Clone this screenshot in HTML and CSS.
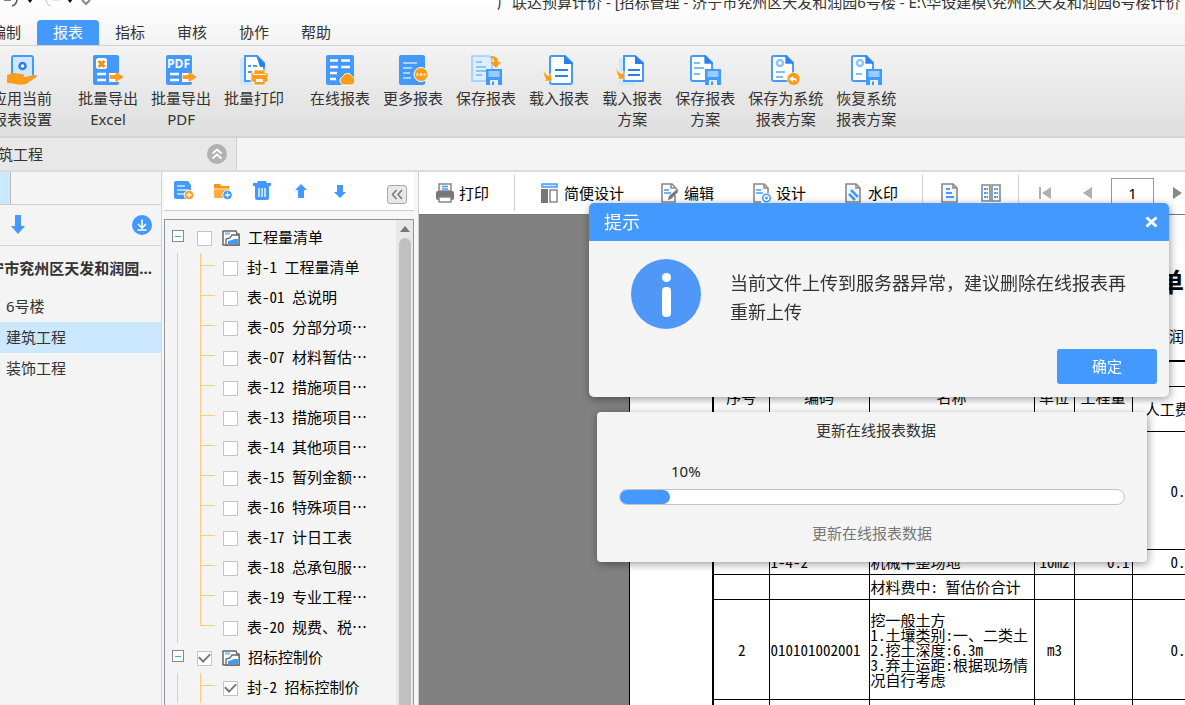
FILE: index.html
```html
<!DOCTYPE html>
<html lang="zh-CN">
<head>
<meta charset="utf-8">
<title>广联达预算计价</title>
<link rel="stylesheet" href="styles.css">
</head>
<body>
<svg class="defs" aria-hidden="true">
  <symbol id="floppy" viewBox="0 0 16 16">
    <path d="M0 0h16v16H0z" fill="#49f"/><path d="M2.500 2h11v6h-11z" fill="#9cf"/><path d="M4 11h8v5H4z" fill="#e6f3ff"/><path d="M6 12.500h2V16H6z" fill="#49f"/>
  </symbol>
  <symbol id="page" viewBox="0 0 24 28">
    <path d="M3 1h13l7 7v17a2 2 0 0 1-2 2H3a2 2 0 0 1-2-2V3a2 2 0 0 1 2-2z" fill="#fff" stroke="#49f" stroke-width="2"/><path d="M15 0l9 9h-9z" fill="#2b7fe8"/>
  </symbol>
  <symbol id="export" viewBox="0 0 15 10">
    <path d="M1 3.500h6V.500l7 4.500-7 4.500v-3H1z" fill="#ff9d1a" stroke="#ff9d1a" stroke-linejoin="round"/>
  </symbol>
  <symbol id="folder-doc" viewBox="0 0 18 16">
    <path d="M1 1h13l1 3h2v11H1z" fill="#fff" stroke="#666" stroke-width="1.500" stroke-linejoin="round"/><path d="M3 2h5v3H3z" fill="#9cf"/><path d="M4 15V9l4-1 2-3h7v10z" fill="#fff" stroke="#666" stroke-width="1.300"/><path d="M6 14v-3l4-1 2-1h4v5z" fill="#49f"/>
  </symbol>
</svg>

<div class="title-bar">
  <svg class="quick" width="92" height="14" viewBox="0 0 92 14" fill="none" aria-hidden="true">
    <path d="M4 4h7M17 3c0 4-2 6-5 7" stroke="#555" stroke-width="1.500"/><path d="M27 3h6l-3 4z" fill="#111"/>
    <path d="M60 4h-7M46 3c0 4 2 6 5 7" stroke="#ccc" stroke-width="1.200"/><path d="M67 3h6l-3 4z" fill="#111"/><path d="M82 4l4 4 4-4" stroke="#888" stroke-width="2"/>
  </svg>
  <span class="app-title">广联达预算计价 - [招标管理 - 济宁市兖州区天发和润园6号楼 - E:\华设建模\兖州区天发和润园6号楼计价</span>
</div>

<nav class="tabs">
  <button class="tab">编制</button>
  <button class="tab active">报表</button>
  <button class="tab">指标</button>
  <button class="tab">审核</button>
  <button class="tab">协作</button>
  <button class="tab">帮助</button>
</nav>

<div class="ribbon">
  <div class="group">
    <button class="tool">
      <svg class="ico" viewBox="0 0 30 30"><path d="M7 1h17a2 2 0 0 1 2 2v20H5V3a2 2 0 0 1 2-2z" fill="#cfe8ff" stroke="#49f" stroke-width="2"/><circle cx="15.500" cy="11" r="3" fill="#fff" stroke="#2b7fe8" stroke-width="2.500"/><path d="M0 20l6-2 9 1c3 0 3 3 0 3h-3 6l9-2c3 0 4 2 1 3l-9 6c-6 2-13-1-19-1z" fill="#ff9d1a"/></svg>
      <span>应用当前<br>报表设置</span></button>
  </div>
  <div class="group">
    <button class="tool">
      <svg class="ico" viewBox="0 0 30 30"><rect width="26" height="30" rx="2" fill="#49f"/><rect x="3" y="3" width="11" height="11" rx="2.500" fill="#fff"/><path d="M5.500 6l6 6M11.500 6l-6 6" stroke="#ff8a00" stroke-width="2.500"/><path d="M4 19h9M4 25h9" stroke="#fff" stroke-width="2.500"/><path d="M16 18h10v9H16z" fill="#fff"/><use href="#export" x="16" y="17" width="15" height="10"/></svg>
      <span>批量导出<br>Excel</span></button>
    <button class="tool">
      <svg class="ico" viewBox="0 0 30 30"><rect width="26" height="30" rx="2" fill="#49f"/><text x="1" y="13" class="pdf">PDF</text><path d="M4 19h9M4 25h9" stroke="#fff" stroke-width="2.500"/><path d="M16 18h10v9H16z" fill="#fff"/><use href="#export" x="16" y="17" width="15" height="10"/></svg>
      <span>批量导出<br>PDF</span></button>
    <button class="tool">
      <svg class="ico" viewBox="0 0 30 30"><rect x="1" y="3" width="14" height="27" rx="2" fill="#cfe8ff"/><path d="M6 1h12l7 7v18H6z" fill="#fff" stroke="#49f" stroke-width="2"/><path d="M17 0l9 9v3h-5z" fill="#2b7fe8"/><path d="M9 11h3M14 11h4M9 17h4" stroke="#49f" stroke-width="2"/><path d="M15 15h11v3h3v9h-3v3H15v-3h-3v-9h3z" fill="#ff9d1a" stroke="#fff" stroke-width=".700"/><path d="M14 19.500h13" stroke="#fff"/><path d="M17 24h7v3h-7z" fill="#fff"/></svg>
      <span>批量打印</span></button>
  </div>
  <div class="group">
    <button class="tool">
      <svg class="ico" viewBox="0 0 30 30"><rect x="1" width="28" height="30" rx="2" fill="#49f"/><path d="M5 5.500h8M16 5.500h9M5 12h8M16 12h9M5 18h7M5 24h6" stroke="#fff" stroke-width="2.500"/><path d="M18 30a4.500 4.500 0 0 1-1-8c1-1 2-2 3-3a5 5 0 0 1 5 0c1 1 2 2 3 3a4.500 4.500 0 0 1-1 8z" fill="#ff9d1a" stroke="#fff"/></svg>
      <span>在线报表</span></button>
    <button class="tool">
      <svg class="ico" viewBox="0 0 30 30"><rect x="1" width="26" height="30" rx="2" fill="#49f"/><path d="M5 8h14M5 13h9M5 18h7M5 23h8" stroke="#a8d4ff" stroke-width="2"/><circle cx="23" cy="19.500" r="7" fill="#ff9d1a" stroke="#fff"/><path d="M18.500 19.500h2M22 19.500h2M25.500 19.500h2" stroke="#fff" stroke-width="2"/></svg>
      <span>更多报表</span></button>
    <button class="tool">
      <svg class="ico" viewBox="0 0 30 30"><path d="M1 1h17l3 3v22H1z" fill="#dceeff" stroke="#9cf" stroke-width="1.500"/><path d="M5 7h6M5 12h10M5 16h10M5 20h6" stroke="#8cc4ff" stroke-width="2"/><path d="M20 1c5 0 7 2 7 6h3l-5 6-6-6h4c0-3-1-4-3-4z" fill="#ff9d1a"/><use href="#floppy" x="15" y="14" width="16" height="16"/></svg>
      <span>保存报表</span></button>
    <button class="tool">
      <svg class="ico" viewBox="0 0 30 30"><path d="M7 1h14l7 7v19a2 2 0 0 1-2 2H8a2 2 0 0 1-2-2V2z" fill="#fff" stroke="#49f" stroke-width="2"/><path d="M20 0l9 9h-9z" fill="#2b7fe8"/><path d="M11 15h13M11 21h13" stroke="#2b7fe8" stroke-width="2"/><path d="M0 13c0 5 2 7 5 8l2-3 1 8H0l2-2c-3-4-3-8-2-11z" fill="#ff9d1a" stroke="#fff" stroke-width=".500"/></svg>
      <span>载入报表</span></button>
    <button class="tool">
      <svg class="ico" viewBox="0 0 30 30"><path d="M2 3h15v27H2z" fill="#cfe8ff"/><path d="M7 1h11l8 7v18H7z" fill="#fff" stroke="#49f" stroke-width="2"/><path d="M18 0l9 9h-9z" fill="#2b7fe8"/><path d="M11 15h12M11 20h12" stroke="#2b7fe8" stroke-width="2"/><path d="M0 11c0 5 2 7 5 8l2-3 1 8H0l2-2c-3-4-3-8-2-11z" fill="#ff9d1a" stroke="#fff" stroke-width=".500"/></svg>
      <span>载入报表<br>方案</span></button>
    <button class="tool">
      <svg class="ico" viewBox="0 0 30 30"><use href="#page" width="23" height="27"/><path d="M4 8h6M4 13h10M4 19h6" stroke="#7fbcff" stroke-width="2"/><use href="#floppy" x="15" y="14" width="16" height="16"/></svg>
      <span>保存报表<br>方案</span></button>
    <button class="tool">
      <svg class="ico" viewBox="0 0 30 30"><use href="#page" width="23" height="27"/><circle cx="9" cy="8" r="3" fill="none" stroke="#8cc4ff" stroke-width="2.500"/><path d="M5 17h9M5 22h7" stroke="#7fbcff" stroke-width="2"/><circle cx="22.500" cy="24" r="6.500" fill="#ff9d1a" stroke="#fff" stroke-width=".500"/><path d="M18 24l4-3v2c3 0 4 1 4 4-1-2-2-2-4-2v2z" fill="#fff"/></svg>
      <span>保存为系统<br>报表方案</span></button>
    <button class="tool">
      <svg class="ico" viewBox="0 0 30 30"><use href="#page" width="23" height="27"/><circle cx="9" cy="8" r="3" fill="none" stroke="#8cc4ff" stroke-width="2.500"/><path d="M5 19h6" stroke="#7fbcff" stroke-width="2"/><use href="#floppy" x="15" y="14" width="16" height="16"/></svg>
      <span>恢复系统<br>报表方案</span></button>
  </div>
</div>

<div class="crumbs">
  <div class="crumb"><span>建筑工程</span>
    <button class="icon-btn" aria-label="收起"><svg width="20" height="20" viewBox="0 0 20 20" fill="none"><circle cx="10" cy="10" r="10" fill="#b1b1b1"/><path d="M5.500 9.500L10 5.500l4.500 4M5.500 14.500L10 10.500l4.500 4" stroke="#fff" stroke-width="1.800"/></svg></button>
  </div>
</div>

<main class="work">
  <aside class="project">
    <div class="strip"><span class="strip-on"></span></div>
    <div class="project-tools">
      <button class="icon-btn" aria-label="下移"><svg width="14" height="20" viewBox="0 0 14 20"><path d="M4 0h6v11h4l-7 8-7-8h4z" fill="#49f"/></svg></button>
      <button class="icon-btn" aria-label="下载"><svg width="20" height="20" viewBox="0 0 20 20" fill="none"><circle cx="10" cy="10" r="10" fill="#49f"/><path d="M10 4.500v8M6 9l4 4 4-4M5.500 15h9" stroke="#fff" stroke-width="1.600"/></svg></button>
    </div>
    <div class="project-name"><span>济宁市兖州区天发和润园...</span></div>
    <ul class="project-list">
      <li>6号楼</li>
      <li class="selected">建筑工程</li>
      <li>装饰工程</li>
    </ul>
  </aside>

  <section class="reports">
    <div class="report-tools">
      <button class="icon-btn" aria-label="新建报表"><svg width="20" height="20" viewBox="0 0 20 20"><path d="M2 0h12l3 4v14H2a2 2 0 0 1-2-2V2a2 2 0 0 1 2-2z" fill="#49f"/><path d="M3 5h8M3 9h11M3 13h8" stroke="#cfe8ff" stroke-width="1.600"/><circle cx="15" cy="14" r="4.800" fill="#ff9d1a" stroke="#fff"/><path d="M12.500 14h5M15 11.500v5" stroke="#fff" stroke-width="1.300"/></svg></button>
      <button class="icon-btn" aria-label="新建文件夹"><svg width="20" height="20" viewBox="0 0 20 20"><path d="M1 3h6l1 2h8v12H2L1 16z" fill="#ffad42"/><path d="M1 3h6l1 2h8v2H1z" fill="#ff9210"/><path d="M1 8h14" stroke="#ffe0b0"/><circle cx="14.500" cy="14" r="4.800" fill="#49f" stroke="#fff"/><path d="M12 14h5M14.500 11.500v5" stroke="#fff" stroke-width="1.300"/></svg></button>
      <button class="icon-btn" aria-label="删除"><svg width="20" height="20" viewBox="0 0 20 20"><path d="M6 0h8l1 2h4v3H1V2h4z" fill="#49f"/><path d="M3 5h14v12a2 2 0 0 1-2 2H5a2 2 0 0 1-2-2z" fill="#49f"/><path d="M7 7v9M10 7v9M13 7v9" stroke="#fff" stroke-width="1.300"/></svg></button>
      <button class="icon-btn" aria-label="上移"><svg width="20" height="20" viewBox="0 0 20 20"><path d="M10 3l6 6h-3v8H7V9H4z" fill="#49f"/></svg></button>
      <button class="icon-btn" aria-label="下移"><svg width="20" height="20" viewBox="0 0 20 20"><path d="M10 17l6-6h-3V4H7v7H4z" fill="#49f"/></svg></button>
      <button class="collapse" aria-label="折叠"><svg width="12" height="11" viewBox="0 0 12 11" fill="none" stroke="#777" stroke-width="1.500"><path d="M5.500 1l-4 4.500 4 4.500M11 1L7 5.500l4 4.500"/></svg></button>
    </div>
    <div class="tree">
      <div class="tree-body">
        <div class="node">
          <button class="toggle" aria-label="折叠"></button>
          <label><input type="checkbox"><svg width="18" height="16"><use href="#folder-doc"/></svg><span>工程量清单</span></label>
        </div>
        <ul class="leaves">
          <li><label><input type="checkbox"><span>封-1 工程量清单</span></label></li>
          <li><label><input type="checkbox"><span>表-01 总说明</span></label></li>
          <li><label><input type="checkbox"><span>表-05 分部分项…</span></label></li>
          <li><label><input type="checkbox"><span>表-07 材料暂估…</span></label></li>
          <li><label><input type="checkbox"><span>表-12 措施项目…</span></label></li>
          <li><label><input type="checkbox"><span>表-13 措施项目…</span></label></li>
          <li><label><input type="checkbox"><span>表-14 其他项目…</span></label></li>
          <li><label><input type="checkbox"><span>表-15 暂列金额…</span></label></li>
          <li><label><input type="checkbox"><span>表-16 特殊项目…</span></label></li>
          <li><label><input type="checkbox"><span>表-17 计日工表</span></label></li>
          <li><label><input type="checkbox"><span>表-18 总承包服…</span></label></li>
          <li><label><input type="checkbox"><span>表-19 专业工程…</span></label></li>
          <li><label><input type="checkbox"><span>表-20 规费、税…</span></label></li>
        </ul>
        <div class="node">
          <button class="toggle" aria-label="折叠"></button>
          <label><input type="checkbox" checked><svg width="18" height="16"><use href="#folder-doc"/></svg><span>招标控制价</span></label>
        </div>
        <ul class="leaves open">
          <li><label><input type="checkbox" checked><span>封-2 招标控制价</span></label></li>
        </ul>
      </div>
      <div class="scroll"><span class="scroll-up"></span><span class="thumb"></span></div>
    </div>
  </section>

  <section class="preview">
    <div class="preview-tools">
      <button class="cmd print"><svg width="18" height="20" viewBox="0 0 18 20"><path d="M3 1h12v7H3z" fill="#fff" stroke="#888" stroke-width="1.500"/><path d="M6 3.500h6M6 6h6" stroke="#49f" stroke-width="1.300"/><rect y="8" width="18" height="9" rx="2" fill="#777"/><path d="M3 14h12v5H3z" fill="#fff" stroke="#888" stroke-width="1.500"/></svg>打印</button>
      <span class="bar"></span>
      <button class="cmd simple"><svg width="18" height="20" viewBox="0 0 18 20"><path d="M1 1h15v3H1z" fill="#cfe8ff" stroke="#49f" stroke-width="1.500"/><path d="M0 6h7v14H0z" fill="#777"/><path d="M9 7h7v12H9z" fill="#fff" stroke="#888" stroke-width="1.500"/></svg>简便设计</button>
      <button class="cmd edit"><svg width="18" height="20" viewBox="0 0 18 20" fill="none"><path d="M14 12v7H1V1h10l3 3" stroke="#888" stroke-width="1.600"/><path d="M10 1v4h4M14 4l3 4" stroke="#888" stroke-width="1.500"/><path d="M3 7h5M3 10h7" stroke="#49f" stroke-width="1.500"/><path d="M7 17l1-4 7-6 2 2-7 7z" fill="#777"/></svg>编辑</button>
      <button class="cmd design"><svg width="18" height="20" viewBox="0 0 18 20" fill="none"><path d="M8 19H1V1h10l4 4v5" stroke="#888" stroke-width="1.600"/><path d="M11 1v4h4" stroke="#888" stroke-width="1.500"/><path d="M3 7h5M3 10h7" stroke="#49f" stroke-width="1.500"/><circle cx="13.500" cy="15" r="3.800" fill="#fff" stroke="#49f" stroke-width="1.500"/><circle cx="13.500" cy="15" r="1.400" fill="#49f"/></svg>设计</button>
      <button class="cmd mark"><svg width="18" height="20" viewBox="0 0 18 20" fill="none"><path d="M1 1h10l4 4v14H1z" fill="#f4f8fc" stroke="#888" stroke-width="1.600"/><path d="M11 1v4h4" stroke="#888" stroke-width="1.500"/><path d="M6 7l7 7M4 11l6 6" stroke="#49f" stroke-width="2.500"/></svg>水印</button>
      <span class="bar"></span>
      <button class="icon-btn" aria-label="单页"><svg width="18" height="20" viewBox="0 0 18 20" fill="none"><path d="M1 1h11l4 4v14H1z" fill="#f4f8fc" stroke="#888" stroke-width="1.600"/><path d="M12 1v4h4" stroke="#888" stroke-width="1.500"/><path d="M5 6h4M5 10h6M5 14h8" stroke="#49f" stroke-width="2"/></svg></button>
      <button class="icon-btn" aria-label="双页"><svg width="20" height="18" viewBox="0 0 20 18" fill="none"><path d="M1 1h8v16H1zM11 1h8v16h-8z" stroke="#888" stroke-width="1.600"/><path d="M3 5h4M3 9h4M3 13h4M13 5h4M13 9h4M13 13h4" stroke="#49f" stroke-width="2" stroke-dasharray="2 .500"/></svg></button>
      <span class="bar"></span>
      <button class="icon-btn" aria-label="首页"><svg width="14" height="14" viewBox="0 0 14 14"><path d="M1 1h2v12H1zM13 1v12L4 7z" fill="#b0b0b0"/></svg></button>
      <button class="icon-btn prev" aria-label="上一页"><svg width="10" height="14" viewBox="0 0 10 14"><path d="M9 1v12L0 7z" fill="#b0b0b0"/></svg></button>
      <input class="page-no" type="text" value="1" aria-label="页码">
      <button class="icon-btn" aria-label="下一页"><svg width="10" height="14" viewBox="0 0 10 14"><path d="M1 1v12l9-6z" fill="#888"/></svg></button>
    </div>
    <div class="desk">
      <div class="paper">
        <h1>单</h1>
        <p class="sub">润园</p>
        <table>
          <colgroup><col class="c1"><col class="c2"><col class="c3"><col class="c4"><col class="c5"><col class="c6"></colgroup>
          <thead>
            <tr class="h1"><th rowspan="2">序号</th><th rowspan="2">编码</th><th rowspan="2">名称</th><th rowspan="2">单位</th><th rowspan="2">工程量</th><th></th></tr>
            <tr class="h2"><th>人工费</th></tr>
          </thead>
          <tbody>
            <tr class="tall"><td></td><td></td><td></td><td></td><td></td><td class="amount">0.</td></tr>
            <tr class="short"><td></td><td>1-4-2</td><td>机械平整场地</td><td class="mid">10m2</td><td class="num">0.1</td><td class="amount">0.</td></tr>
            <tr class="short"><td></td><td></td><td>材料费中: 暂估价合计</td><td></td><td></td><td></td></tr>
            <tr class="item"><td class="mid">2</td><td>010101002001</td><td class="desc">挖一般土方<br>1.土壤类别:一、二类土<br>2.挖土深度:6.3m<br>3.弃土运距:根据现场情<br>况自行考虑</td><td class="mid">m3</td><td></td><td class="amount">0.</td></tr>
            <tr class="short"><td></td><td></td><td></td><td></td><td></td><td></td></tr>
          </tbody>
        </table>
      </div>
    </div>
  </section>
</main>

<div class="progress-box" role="status">
  <p class="p-title">更新在线报表数据</p>
  <p class="p-value">10%</p>
  <div class="track"><div class="fill" style="width:10%"></div></div>
  <p class="p-note">更新在线报表数据</p>
</div>

<div class="dialog" role="dialog" aria-labelledby="dlg-title">
  <header><span id="dlg-title">提示</span>
    <button class="icon-btn" aria-label="关闭"><svg width="13" height="12" viewBox="0 0 13 12"><path d="M1.500 1.500l10 9M11.500 1.500l-10 9" stroke="#fff" stroke-width="3"/></svg></button></header>
  <div class="dialog-body">
    <svg class="info" width="70" height="70" viewBox="0 0 70 70"><circle cx="35" cy="35" r="35" fill="#5098f8"/><circle cx="35.500" cy="18.500" r="4.500" fill="#fff"/><rect x="31" y="28" width="9" height="30" rx="4" fill="#fff"/></svg>
    <p>当前文件上传到服务器异常，建议删除在线报表再<br>重新上传</p>
  </div>
  <footer><button class="ok">确定</button></footer>
</div>
</body>
</html>
```
FILE: styles.css
```css
* { box-sizing: border-box; margin: 0; padding: 0; }
html, body { height: 100%; }
body {
  position: relative;
  display: flex;
  flex-direction: column;
  overflow: hidden;
  background: linear-gradient(#fff, #f2f2f2 46px);
  color: #333;
  font: 15px/21px "Noto Sans", "Noto Sans CJK SC", sans-serif;
}
button { font: inherit; color: inherit; background: none; border: 0; cursor: pointer; }
ul { list-style: none; }
.defs { position: absolute; width: 0; height: 0; }
.icon-btn { display: flex; align-items: center; justify-content: center; }

/* title bar and tabs */
.title-bar { display: flex; align-items: center; height: 5px; flex: none; }
.quick { flex: none; }
.app-title { margin-left: 405px; white-space: nowrap; }
.tabs { display: flex; flex: none; margin: 15px 0 0 -25px; border-bottom: 1px solid #d2d2d2; }
.tab { height: 25px; padding: 0 16px; line-height: 25px; border-radius: 4px 4px 0 0; white-space: nowrap; }
.tab.active { background: #49f; color: #fff; }

/* ribbon */
.ribbon {
  display: flex; flex: none; gap: 26px; height: 92px; padding-top: 9px;
  background: linear-gradient(#f3f3f3, #dedede); border-bottom: 2px solid #d4d4d4;
}
.group { display: flex; align-items: flex-start; gap: 13px; }
.group:first-child { margin-left: -8px; }
.tool { display: flex; flex-direction: column; align-items: center; gap: 3px; white-space: nowrap; }
.ico { width: 30px; height: 30px; overflow: visible; }
.pdf { font: bold 12px "Open Sans", sans-serif; fill: #fff; }

/* breadcrumb row */
.crumbs { display: flex; flex: none; height: 34px; background: #f4f4f4; border-bottom: 2px solid #dcdcdc; }
.crumb {
  display: flex; align-items: center; justify-content: space-between;
  width: 237px; padding-right: 9px; background: #e8e8e8; border-right: 1px solid #d0d0d0;
}
.crumb span { margin-left: -17px; }

.work { display: flex; flex: 1; min-height: 0; background: #f4f4f4; }

/* project pane */
.project { flex: none; width: 162px; overflow: hidden; border-right: 1px solid #d4d4d4; }
.strip { height: 33px; border-bottom: 1px solid #ccc; }
.strip-on { display: block; width: 11px; height: 100%; background: #cce8ff; border-right: 1px solid #bbb; }
.project-tools {
  display: flex; align-items: center; justify-content: space-between;
  height: 41px; padding: 0 9px 0 11px; border-bottom: 1px solid #d4d4d4;
}
.project-name { display: flex; justify-content: flex-end; height: 45px; padding-right: 9px; line-height: 45px; font-weight: bold; white-space: nowrap; }
.project-list li { height: 31px; padding-left: 6px; line-height: 31px; }
.project-list .selected { background: #cce8ff; }

/* report tree */
.reports { display: flex; flex-direction: column; flex: none; width: 257px; padding: 0 4px 0 2px; border-right: 1px solid #ccc; background: #f7f7f7; }
.report-tools {
  display: flex; align-items: center; flex: none; gap: 19px; height: 39px; padding: 0 7px 0 10px;
  background: #fff; border-bottom: 1px solid #ccc;
}
.collapse {
  display: flex; align-items: center; justify-content: center; width: 20px; height: 19px; margin: 6px 0 0 auto;
  background: #e8e8e8; border: 1px solid #aaa; border-radius: 3px;
}
.tree {
  display: flex; flex: 1; min-height: 0; margin-top: 8px; overflow: hidden;
  background: #f4f4f4; border: 1px solid #8e959c; border-bottom: 0;
  color: #000; font-family: "Noto Sans Mono CJK SC", "Noto Sans CJK SC", monospace;
}
.tree-body { flex: 1; min-width: 0; padding: 3px 0 0 7px; }
.node, .node label, .leaves label { display: flex; align-items: center; white-space: nowrap; }
.tree span { padding-bottom: 3px; }
.node { height: 30px; }
.node label { gap: 8px; margin-left: 13px; }
.node label svg { margin: 0 0 0 2px; }
.toggle { width: 12px; height: 12px; margin-bottom: 4px; border: 1px solid #888; background: linear-gradient(#49a8d8, #49a8d8) center / 6px 1px no-repeat #fff; }
.tree input { appearance: none; width: 15px; height: 15px; border: 1px solid #c4c4c4; background: #fff; display: grid; place-items: center; }
.tree input:checked::after { content: ""; width: 9px; height: 5px; margin-bottom: 3px; border: solid #777; border-width: 0 0 2px 2px; transform: rotate(-45deg); }
.leaves { margin-left: 5px; padding-left: 22px; border-left: 1px solid #ffc880; }
.leaves li { position: relative; height: 30px; padding-left: 23px; }
.leaves label { height: 30px; gap: 9px; }
.leaves li::before { content: ""; position: absolute; left: 0; top: 0; height: 30px; border-left: 1px solid #ffc880; }
.leaves:not(.open) li:last-child::before { height: 13px; }
.leaves li::after { content: ""; position: absolute; left: 0; top: 12px; width: 15px; border-top: 1px solid #ffc880; }
.scroll { display: flex; flex-direction: column; align-items: center; width: 17px; padding-top: 6px; background: #e8e8e8; }
.tree .scroll-up { padding: 0; border: 5px solid transparent; border-top: 0; border-bottom: 6px solid #777; }
.thumb { flex: 1; width: 12px; margin-top: 6px; border-radius: 6px 6px 0 0; background: #c0c0c0; }

/* preview */
.preview { display: flex; flex-direction: column; flex: 1; min-width: 0; overflow: hidden; }
.preview-tools { display: flex; align-items: center; flex: none; height: 43px; background: #fff; color: #000; border-bottom: 1px solid #777; }
.preview-tools > * { flex: none; }
.cmd { display: flex; align-items: center; gap: 5px; }
.print { margin: 0 25px 0 17px; }
.bar { width: 1px; height: 36px; background: #d0d0d0; }
.simple { margin-left: 26px; }
.edit { margin-left: 37px; }
.design, .mark { margin-left: 39px; }
.mark + .bar { margin: 0 18px 0 24px; }
.bar + .icon-btn + .icon-btn { margin: 0 17px 0 22px; }
.bar + .icon-btn + .prev { margin: 0 18px 0 31px; }
.bar:last-of-type { margin-right: 19px; }
.page-no { width: 43px; height: 31px; margin-right: 18px; border: 1px solid #999; font: inherit; text-align: center; }
.desk { display: flex; flex: 1; min-height: 0; background: #808080; }
.paper {
  flex: 1; min-width: 0; margin-left: 210px; padding: 49px 0 0 82px; overflow: hidden;
  background: #fff; border-left: 1px solid #000; color: #000;
  font: 15px/15px "Noto Sans Mono CJK SC", "Noto Sans CJK SC", monospace;
}
.paper h1 { margin-left: 446px; font-size: 26px; line-height: 34px; }
.paper .sub { margin: 27px 0 14px 457px; line-height: 21px; white-space: nowrap; font-family: "Noto Sans CJK SC", sans-serif; }
table { width: 490px; table-layout: fixed; border-collapse: collapse; border: 2px solid #000; }
.c1 { width: 56px; } .c2 { width: 100px; } .c3 { width: 165px; }
.c4 { width: 40px; } .c5 { width: 58px; } .c6 { width: 71px; }
th, td { border: 1px solid #000; font-weight: normal; white-space: nowrap; overflow: hidden; }
td { padding-left: 1px; }
.h1 { height: 25px; } .h2 { height: 45px; }
.tall { height: 118px; } .short { height: 25px; } .item { height: 100px; }
.mid { text-align: center; }
.num { padding-right: 2px; text-align: right; }
.amount { padding-left: 38px; }

/* pop-ups */
.dialog {
  position: absolute; left: 589px; top: 203px; width: 580px; overflow: hidden;
  background: #f4f4f4; border-radius: 5px; filter: drop-shadow(1px 2px 4px rgba(0, 0, 0, .4));
}
.dialog header { display: flex; align-items: center; justify-content: space-between; height: 38px; padding: 0 11px 0 15px; background: #49f; color: #fff; font-size: 18px; }
.dialog-body { display: flex; align-items: center; gap: 29px; padding: 18px 0 20px 42px; }
.dialog-body p { padding-top: 8px; font-size: 18px; line-height: 29px; white-space: nowrap; }
.info { flex: none; }
.dialog footer { display: flex; justify-content: flex-end; padding: 0 12px 13px; }
.ok { width: 100px; height: 35px; background: #49f; color: #fff; border-radius: 3px; }
.progress-box {
  position: absolute; left: 597px; top: 412px; width: 550px; padding: 8px 22px 18px;
  background: #f4f4f4; border-radius: 4px; box-shadow: 1px 2px 8px rgba(0, 0, 0, .4);
}
.p-title { padding-left: 8px; text-align: center; }
.p-value { margin: 20px 0 7px 52px; color: #222; }
.track { height: 16px; background: #fff; border: 1px solid #c4c4c4; border-radius: 8px; }
.fill { height: 100%; background: #49f; border-radius: 7px; }
.p-note { margin-top: 18px; text-align: center; color: #777; }
```
